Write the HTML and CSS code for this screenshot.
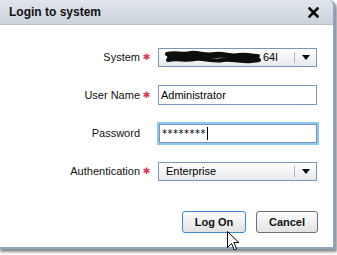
FILE: index.html
```html
<!DOCTYPE html>
<html>
<head>
<meta charset="utf-8">
<link rel="stylesheet" href="styles.css">
</head>
<body>
<div class="dialog">
  <div class="titlebar">
    <span class="title">Login to system</span>
    <svg class="close" width="11" height="11" viewBox="0 0 11 11"><path d="M1.5 1.5 L9.5 9.5 M9.5 1.5 L1.5 9.5" stroke="#000" stroke-width="2.6" stroke-linecap="square"/></svg>
  </div>
  <div class="form">
    <div class="row">
      <span class="label">System</span>
      <span class="req">✱</span>
      <div class="select">
        <span class="sel-text">
          <svg class="scribble" width="98" height="14" viewBox="0 0 98 14"><path d="M2 4 C10 2 18 5 26 3 C34 2 40 6 50 4 C60 3 66 7 74 5 C82 4 88 6 93 6 M3 10 C12 8 20 11 30 9 C40 8 48 12 58 10 C68 9 78 12 86 11 C90 10 92 11 94 10 M4 7 C20 5 36 8 52 6 C66 5 80 9 92 8" stroke="#0d0d0d" stroke-width="4" fill="none" stroke-linecap="round"/></svg><span class="tail">64l</span>
        </span>
        <span class="arrow-box"><span class="tri"></span></span>
      </div>
    </div>
    <div class="row">
      <span class="label">User Name</span>
      <span class="req">✱</span>
      <div class="input">Administrator</div>
    </div>
    <div class="row">
      <span class="label">Password</span>
      <span class="req"></span>
      <div class="input focus"><span class="pw">********</span><span class="caret"></span></div>
    </div>
    <div class="row">
      <span class="label">Authentication</span>
      <span class="req">✱</span>
      <div class="select">
        <span class="sel-text pad">Enterprise</span>
        <span class="arrow-box"><span class="tri"></span></span>
      </div>
    </div>
  </div>
  <div class="buttons">
    <button class="btn default">Log On</button>
    <button class="btn">Cancel</button>
  </div>
  <svg class="cursor" width="13" height="20" viewBox="0 0 13 20"><path d="M0.5 0.5 L0.5 16.5 L4.5 12.5 L7.3 18.8 L9.6 17.8 L6.9 11.6 L12 11.6 Z" fill="#fff" stroke="#000" stroke-width="1" stroke-linejoin="miter"/></svg>
</div>
</body>
</html>
```
FILE: styles.css
```css
html, body {
  margin: 0;
  padding: 0;
  background: #ffffff;
}
body {
  width: 337px;
  height: 255px;
  overflow: hidden;
  font-family: "Liberation Sans", Arial, sans-serif;
  font-size: 11px;
  color: #000;
}
.dialog {
  position: relative;
  width: 333px;
  height: 247px;
  background: #fff;
  border-right: 2px solid #8ea5c6;
  border-bottom: 2px solid #8ea5c6;
  border-top-right-radius: 7px;
  box-shadow: 1px 2px 3px 1px rgba(60, 60, 60, 0.6);
}
.titlebar {
  height: 24px;
  border-bottom: 1px solid #b4bfcc;
  background: linear-gradient(#e0e5eb, #cbd3dc);
  border-top-right-radius: 6px;
  display: flex;
  align-items: center;
  justify-content: space-between;
  padding: 0 14px 0 9px;
}
.title {
  font-weight: bold;
  font-size: 12px;
  color: #111;
}
.close {
  display: block;
}
.form {
  display: flex;
  flex-direction: column;
  gap: 18px;
  padding-top: 22px;
}
.row {
  display: grid;
  grid-template-columns: 140px 18px 159px;
  height: 20px;
  align-items: center;
}
.label {
  text-align: right;
  color: #111;
}
.req {
  color: #e0324a;
  font-family: "DejaVu Sans", sans-serif;
  font-size: 9px;
  text-align: center;
  padding-right: 5px;
}
.select {
  height: 17px;
  border: 1px solid #7b97ba;
  background: linear-gradient(#ffffff, #f1f2f4 60%, #e6e8eb);
  display: flex;
  align-items: center;
}
.sel-text {
  flex: 1;
  display: flex;
  align-items: center;
  height: 100%;
}
.sel-text.pad {
  padding-left: 7px;
}
.scribble {
  margin-left: 6px;
  display: block;
}
.tail {
  margin-left: 0;
}
.arrow-box {
  width: 21px;
  height: 11px;
  border-left: 1px solid #a9b5c4;
  display: flex;
  align-items: center;
  justify-content: center;
}
.tri {
  width: 0;
  height: 0;
  border-left: 4px solid transparent;
  border-right: 4px solid transparent;
  border-top: 5px solid #000;
}
.input {
  height: 18px;
  border: 1px solid #7b97ba;
  background: #fff;
  display: flex;
  align-items: center;
  padding-left: 2px;
}
.input.focus {
  height: 17px;
  border: 1px solid #7a8fc4;
  box-shadow: 0 0 0 2px #8ccbf0;
  margin-left: 1px;
}
.pw {
  font-family: "DejaVu Sans", sans-serif;
  font-size: 10px;
  letter-spacing: 0.5px;
}
.caret {
  width: 1px;
  height: 13px;
  background: #000;
  margin-left: 1px;
}
.buttons {
  display: flex;
  justify-content: flex-end;
  gap: 10px;
  padding-right: 15px;
  margin-top: 30px;
}
.btn {
  font-family: "Liberation Sans", Arial, sans-serif;
  font-size: 11px;
  font-weight: bold;
  color: #111;
  height: 22px;
  border: 1px solid #707070;
  border-radius: 3px;
  background: linear-gradient(#fdfdfd, #eeeeee 55%, #e2e2e2);
  padding: 0;
  width: 62px;
}
.btn.default {
  width: 64px;
  border-color: #3b8ad0;
}
.cursor {
  position: absolute;
  left: 227px;
  top: 231px;
}
```
